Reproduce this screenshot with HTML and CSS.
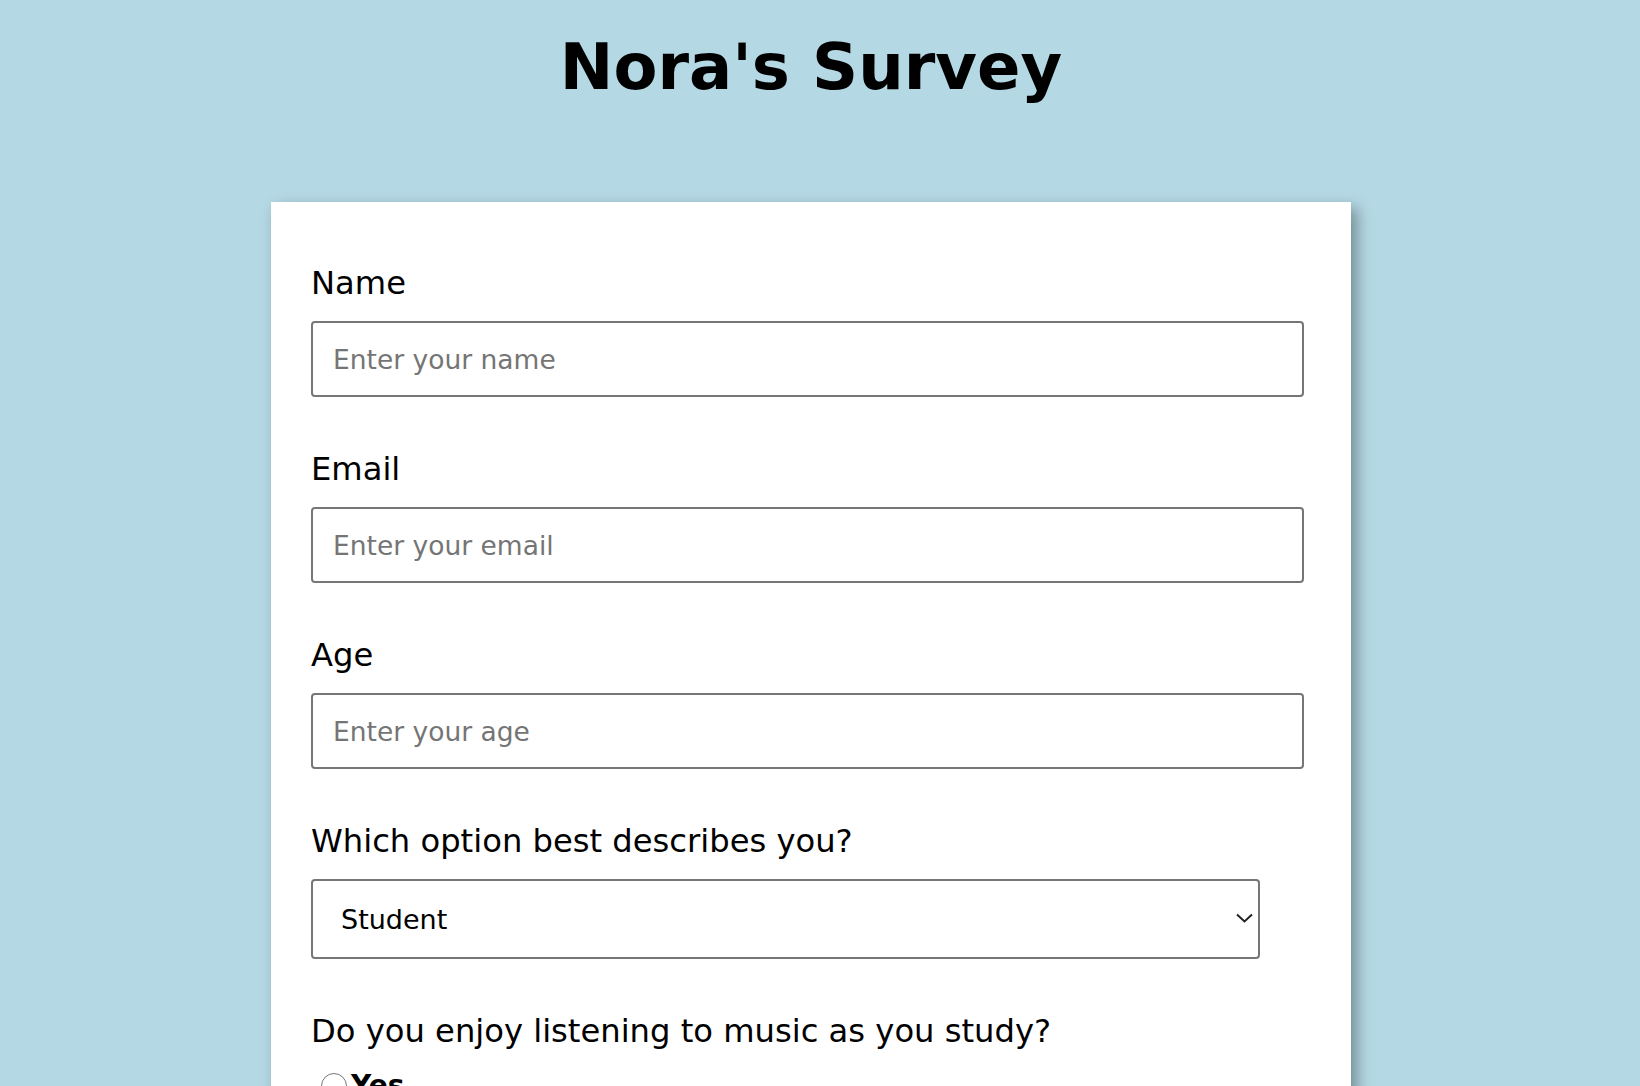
FILE: index.html
```html
<!DOCTYPE html>
<html lang="en">
<head>
<meta charset="utf-8">
<title>Nora's Survey</title>
<link rel="stylesheet" href="styles.css">
</head>
<body>
<h1 class="title">Nora's Survey</h1>
<form class="card">
  <div class="field">
    <label class="label" for="name">Name</label>
    <input class="input" id="name" type="text" placeholder="Enter your name">
  </div>
  <div class="field">
    <label class="label" for="email">Email</label>
    <input class="input" id="email" type="email" placeholder="Enter your email">
  </div>
  <div class="field">
    <label class="label" for="age">Age</label>
    <input class="input" id="age" type="number" placeholder="Enter your age">
  </div>
  <div class="field">
    <label class="label" for="role">Which option best describes you?</label>
    <div class="select-wrap">
      <select class="select" id="role">
        <option>Student</option>
        <option>Full-time job</option>
        <option>Prefer not to say</option>
      </select>
      <svg class="chevron" width="17" height="10" viewBox="0 0 17 10" aria-hidden="true"><path d="M1 1.5l7.5 7 7.5-7" fill="none" stroke="#222" stroke-width="2"/></svg>
    </div>
  </div>
  <div class="field">
    <p class="label">Do you enjoy listening to music as you study?</p>
    <label class="radio"><input type="radio" name="music" class="radio-input"><span>Yes</span></label>
    <label class="radio"><input type="radio" name="music" class="radio-input"><span>No</span></label>
  </div>
</form>
</body>
</html>
```
FILE: styles.css
```css
html, body {
  background: #b4d8e4;
}
body {
  margin: 0 18px 0 0;
  font-family: "DejaVu Sans", Verdana, sans-serif;
  color: #000;
}
.title {
  margin: 30px 0 0;
  text-align: center;
  font-size: 64px;
  font-weight: bold;
  line-height: normal;
}
.card {
  width: 1080px;
  box-sizing: border-box;
  margin: 98px auto 40px;
  padding: 62px 40px 40px;
  background: #fff;
  box-shadow: 6px 6px 14px rgba(0, 0, 0, 0.35);
}
.field {
  margin-bottom: 53px;
}
.label {
  display: block;
  margin: 0 0 19px;
  font-size: 32.2px;
  line-height: normal;
}
.input {
  display: block;
  box-sizing: border-box;
  width: 993px;
  height: 76px;
  margin: 0;
  padding: 0 20px;
  border: 2px solid #767676;
  border-radius: 4px;
  font-family: "DejaVu Sans", Verdana, sans-serif;
  font-size: 26.5px;
  color: #000;
  background: #fff;
}
.input::placeholder {
  color: #757575;
}
.select-wrap {
  position: relative;
  width: 949px;
}
.select {
  display: block;
  box-sizing: border-box;
  width: 949px;
  height: 80px;
  margin: 0;
  padding: 0 28px;
  border: 2px solid #767676;
  border-radius: 4px;
  font-family: "DejaVu Sans", Verdana, sans-serif;
  font-size: 27px;
  color: #000;
  background: #fff;
  -webkit-appearance: none;
  appearance: none;
}
.chevron {
  position: absolute;
  right: 7px;
  top: 34px;
}
.label + .radio {
  margin-top: 0;
}
.radio {
  display: flex;
  align-items: center;
  gap: 4px;
  font-size: 28px;
  font-weight: bold;
  line-height: normal;
}
.radio-input {
  width: 26px;
  height: 26px;
  margin: 0 0 0 10px;
}
```
